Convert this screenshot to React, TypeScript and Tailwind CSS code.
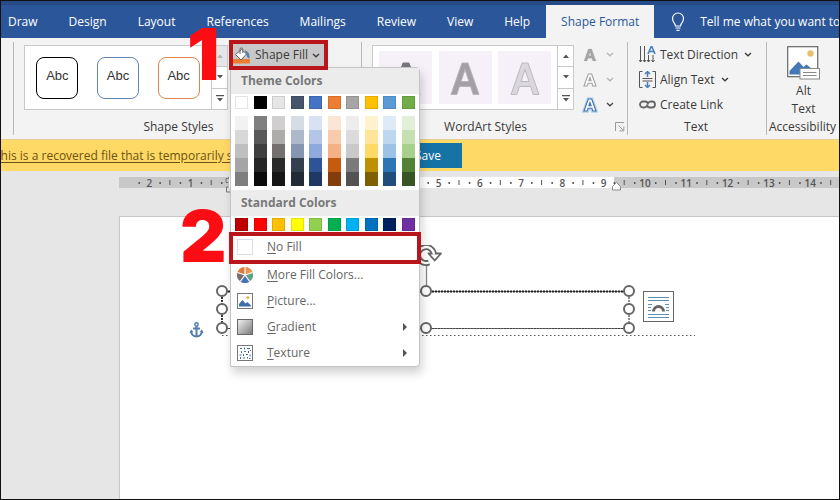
import { ReactNode } from "react";

const FONT = "font-['Open_Sans','Noto_Sans',sans-serif]";

const tabs = ["Draw", "Design", "Layout", "References", "Mailings", "Review", "View", "Help"];

const themeColors = ["#ffffff", "#000000", "#e7e6e6", "#44546a", "#4472c4", "#ed7d31", "#a5a5a5", "#ffc000", "#5b9bd5", "#70ad47"];

const themeShades = [
  ["#f2f2f2", "#d8d8d8", "#bfbfbf", "#a5a5a5", "#7f7f7f"],
  ["#7f7f7f", "#595959", "#3f3f3f", "#262626", "#0c0c0c"],
  ["#d0cece", "#aeabab", "#757070", "#2b2a2a", "#171616"],
  ["#d6dce4", "#adb9ca", "#8496b0", "#323f4f", "#222a35"],
  ["#d9e2f3", "#b4c6e7", "#8eaadb", "#2f5496", "#1f3864"],
  ["#fbe5d5", "#f7cbac", "#f4b183", "#c55a11", "#833c0b"],
  ["#ededed", "#dbdbdb", "#c9c9c9", "#7b7b7b", "#525252"],
  ["#fff2cc", "#fee599", "#ffd965", "#bf9000", "#7f6000"],
  ["#deebf6", "#bdd7ee", "#9cc3e5", "#2e75b5", "#1e4e79"],
  ["#e2efd9", "#c5e0b3", "#a8d08d", "#538135", "#375623"],
];

const standardColors = ["#c00000", "#ff0000", "#ffc000", "#ffff00", "#92d050", "#00b050", "#00b0f0", "#0070c0", "#002060", "#7030a0"];

function Chevron({ className = "" }: { className?: string }) {
  return (
    <svg viewBox="0 0 8 5" className={`h-[5px] w-2 shrink-0 ${className}`} fill="none" stroke="currentColor" strokeWidth="1.3">
      <path d="M1 1l3 2.8L7 1" />
    </svg>
  );
}

function ScrollColumn({ label, atTop = false }: { label: string; atTop?: boolean }) {
  return (
    <div className="flex w-4 flex-col divide-y divide-[#c9c9c9] border-l border-[#c9c9c9] text-[#555]">
      <button aria-label={`${label}: previous row`} className={`flex flex-1 items-center justify-center ${atTop ? "bg-[#e6e6e6] text-[#b5b5b5]" : ""}`}>
        <svg viewBox="0 0 6 4" className="h-1 w-1.5" fill="currentColor"><path d="M0 4l3-3.6L6 4z" /></svg>
      </button>
      <button aria-label={`${label}: next row`} className="flex flex-1 items-center justify-center">
        <svg viewBox="0 0 6 4" className="h-1 w-1.5" fill="currentColor"><path d="M0 0l3 3.6L6 0z" /></svg>
      </button>
      <button aria-label={`${label}: more`} className="flex flex-1 items-center justify-center">
        <svg viewBox="0 0 8 7" className="h-[7px] w-2" fill="currentColor"><path d="M0 0h8v1.2H0zM1 3l3 3.6L7 3z" /></svg>
      </button>
    </div>
  );
}

function Launcher({ label }: { label: string }) {
  return (
    <button aria-label={label} className="text-[#999]">
      <svg viewBox="0 0 10 10" className="size-[10px]" fill="none" stroke="currentColor">
        <path d="M.5 9V.5H9M3.5 3.5L8 8M8.8 4.5v4.3H4.5" />
      </svg>
    </button>
  );
}

function Group({ title, launcher = false, className = "", children }: { title: string; launcher?: boolean; className?: string; children: ReactNode }) {
  return (
    <section aria-label={title} className={`flex shrink-0 flex-col border-l border-[#b9b9b9] ${className}`}>
      <div className="flex flex-1 items-start">{children}</div>
      <div className="flex h-4 items-center pr-0.5">
        <span className={`flex-1 text-center text-xs leading-4 whitespace-nowrap ${launcher ? "pr-1.5" : ""}`}>{title}</span>
        {launcher && <Launcher label={`${title} settings`} />}
      </div>
    </section>
  );
}

function BucketIcon() {
  return (
    <svg viewBox="0 0 18 17" className="h-[17px] w-[18px] shrink-0">
      <rect x="0" y="12" width="17" height="4.5" fill="#ed7d31" />
      <path d="M11.500 3.500c3.500.4 5.500 3 5 8-1.800-.6-3-2-3-4.500z" fill="#5380ad" />
      <path d="M2.500 7.500L8.500 2.500l5 4.500-5.500 6z" fill="#fff" stroke="#666" />
      <path d="M7 7V2.200C7 .4 9.800.4 9.800 2.200V6" fill="none" stroke="#666" />
    </svg>
  );
}

function ColorWheelIcon() {
  return (
    <svg viewBox="0 0 16 16" className="size-4">
      <path d="M8 8L8 0A8 8 0 0 1 15.600 5.500z" fill="#e8934f" />
      <path d="M8 8L15.600 5.500A8 8 0 0 1 12.700 14.500z" fill="#5f9f86" />
      <path d="M8 8L12.700 14.500A8 8 0 0 1 3.300 14.500z" fill="#4674b4" />
      <path d="M8 8L3.300 14.500A8 8 0 0 1 .4 5.500z" fill="#7c6f74" />
      <path d="M8 8L.4 5.500A8 8 0 0 1 8 0z" fill="#dd7a3c" />
      <path d="M8 8V0M8 8l7.600-2.500M8 8l4.700 6.500M8 8l-4.700 6.500M8 8L.4 5.500" stroke="#fff" strokeWidth="1.200" />
    </svg>
  );
}

function PictureIcon() {
  return (
    <svg viewBox="0 0 16 16" className="size-4">
      <rect x=".5" y=".5" width="15" height="15" fill="#fff" stroke="#777" />
      <path d="M2 13.500V11l3.500-4 3 3.500L10.500 9l3.500 3.500v1z" fill="#3f6ea8" />
      <circle cx="10.800" cy="4.500" r="1.500" fill="#e8b450" />
    </svg>
  );
}

function GradientIcon() {
  return (
    <svg viewBox="0 0 16 16" className="size-4">
      <defs>
        <linearGradient id="grey-fade" x1="0" y1="0" x2="1" y2="1">
          <stop offset="0" stopColor="#f4f4f4" />
          <stop offset="1" stopColor="#777" />
        </linearGradient>
      </defs>
      <rect x=".5" y=".5" width="15" height="15" fill="url(#grey-fade)" stroke="#666" />
    </svg>
  );
}

function TextureIcon() {
  return (
    <svg viewBox="0 0 16 16" className="size-4">
      <rect x=".5" y=".5" width="15" height="15" fill="#fff" stroke="#777" />
      <path
        d="M3 3h2v1H3zM7 2.500h1v2H7zM10 3h3v1h-3zM4 6h1v2H4zM7 6h2v1H7zM11 6h1v2h-1zM13 5h1v1h-1zM2.500 9.500h2v1h-2zM6 9h1v2H6zM9 9h2v1H9zM12.500 9.500h1v2h-1zM3 12h1v2H3zM6 12.500h2v1H6zM10 12h1v1.500h-1zM12 13h1.500v1H12z"
        fill="#3f6ea8"
      />
    </svg>
  );
}

function Swatch({ color, name }: { color: string; name: string }) {
  return <button role="menuitem" aria-label={name} className="block size-[13px] border border-black/10" style={{ backgroundColor: color }} />;
}

function MenuRow({ hotkey, rest, icon, submenu = false }: { hotkey: string; rest: string; icon: ReactNode; submenu?: boolean }) {
  return (
    <button role="menuitem" className="flex h-[26px] w-full items-center pr-3 pl-1.5 text-left">
      <span className="flex w-[30px] shrink-0 items-center">{icon}</span>
      <span className="flex-1 text-xs"><u className="underline-offset-2">{hotkey}</u>{rest}</span>
      {submenu && <svg viewBox="0 0 4 8" className="h-2 w-1" fill="#555"><path d="M0 0l4 4-4 4z" /></svg>}
    </button>
  );
}

function FillMenu() {
  return (
    <div role="menu" aria-label="Shape Fill" className="absolute top-[25px] -left-px z-20 w-[190px] rounded-r-sm border border-[#c4c4c4] bg-white text-[#666] shadow-[2px_6px_10px_rgba(0,0,0,0.18)]">
      <h3 className="h-[26px] bg-[#ececec] pl-2.5 text-xs leading-[26px] font-bold text-[#787878]">Theme Colors</h3>
      <div className="flex justify-between px-1 pt-0.5">
        {themeColors.map((c) => <Swatch key={c} color={c} name={`Theme ${c}`} />)}
      </div>
      <div className="flex justify-between px-1 pt-[7px] pb-1">
        {themeShades.map((column, i) => (
          <div key={i} className="flex flex-col">
            {column.map((c) => (
              <button key={c} role="menuitem" aria-label={`Shade ${c}`} className="h-3.5 w-[13px]" style={{ backgroundColor: c }} />
            ))}
          </div>
        ))}
      </div>
      <h3 className="h-[26px] bg-[#ececec] pl-2.5 text-xs leading-[26px] font-bold text-[#787878]">Standard Colors</h3>
      <div className="flex justify-between px-1 pt-0.5 pb-[3px]">
        {standardColors.map((c) => <Swatch key={c} color={c} name={`Standard ${c}`} />)}
      </div>
      <div className="relative">
        <MenuRow hotkey="N" rest="o Fill" icon={<span className="size-4 border border-[#dcdcea]" />} />
        <span className="pointer-events-none absolute -inset-x-0.5 -top-0.5 h-8 border-4 border-[#b9151b]" />
        <span className="absolute -top-[34px] -left-[51px] text-[72px] leading-none font-black text-[#fb0d13] font-['Inter',sans-serif]">2</span>
      </div>
      <div className="pt-0.5">
        <MenuRow hotkey="M" rest="ore Fill Colors..." icon={<ColorWheelIcon />} />
        <MenuRow hotkey="P" rest="icture..." icon={<PictureIcon />} />
        <MenuRow hotkey="G" rest="radient" icon={<GradientIcon />} submenu />
        <MenuRow hotkey="T" rest="exture" icon={<TextureIcon />} submenu />
      </div>
    </div>
  );
}

function ShapeStyle({ label, className }: { label: string; className: string }) {
  return (
    <button aria-label={label} className={`flex size-[42px] items-start justify-center rounded-lg border pt-2 text-[13px] leading-5 text-[#333] font-['Liberation_Sans',sans-serif] ${className}`}>
      Abc
    </button>
  );
}

function WordArt({ label, fill, stroke }: { label: string; fill: string; stroke: string }) {
  return (
    <button aria-label={label} className="flex size-[53px] items-end justify-center bg-[#f6f1f8] pb-2">
      <svg viewBox="0 0 30 34" className="h-[34px] w-[30px]">
        <path
          d="M12 1h6L29 32.500h-5.800l-2.600-8H9.400l-2.600 8H1zM15 7.500L11 19.500h8z"
          fill={fill} fillRule="evenodd" stroke={stroke}
        />
      </svg>
    </button>
  );
}

function LetterTool({ label, kind }: { label: string; kind: "fill" | "outline" | "glow" }) {
  const fill = kind === "fill" ? "#a6a6a6" : "#fff";
  const stroke = kind === "glow" ? "#3f72ab" : "#a0a0a0";
  return (
    <button aria-label={label} className={`flex h-[25px] items-center gap-2 ${kind === "glow" ? "text-[#444]" : "text-[#b5b5b5]"}`}>
      <svg viewBox="0 0 16 16" className="size-4">
        {kind === "glow" && <path d="M6.300 2h3.400l4.300 12h-3.500l-.8-2.500H6.300L5.500 14H2z" fill="none" stroke="#b9d2ec" strokeWidth="3.500" />}
        <path d="M6.300 2h3.400l4.300 12h-3.200l-.9-2.800H6.100L5.200 14H2zM8 5.500L6.900 8.800h2.200z" fill={fill} fillRule="evenodd" stroke={stroke} strokeWidth={kind === "fill" ? 0.2 : 1.1} />
      </svg>
      <Chevron />
    </button>
  );
}

function Ruler() {
  const zero = 113;
  const pitch = 41.3;
  const units = Array.from({ length: 17 }, (_, i) => i - 2);
  return (
    <svg aria-label="Ruler" className="block h-4 w-full text-[10px] font-semibold" fill="#555">
      <rect x="0" y="0" width="100%" height="11" fill="#c8c8c8" />
      <rect x="110" y="0" width="385" height="11" fill="#fff" />
      {units.map((n) => {
        const x = zero + n * pitch;
        return (
          <g key={n}>
            {(n < 0 || n > 4) && <text x={x} y="9.500" textAnchor="middle">{Math.abs(n)}</text>}
            <rect x={x - 11} y="5" width="1.500" height="2" />
            <rect x={x + 10} y="5" width="1.500" height="2" />
            <rect x={x + 20} y="3" width="1" height="5" />
          </g>
        );
      })}
      <path d="M109.500-2v3.500h-2.500v4h2.500M109.500 10h-2v5h4" fill="none" stroke="#777" />
      <path d="M497.500 5.500l4 4v3.500h-8v-3.500z" fill="#fff" stroke="#888" />
    </svg>
  );
}

function ShapeSelection() {
  const handles = [[33, 46], [33, 64], [33, 83], [237, 46], [237, 83], [440, 46], [440, 64], [440, 83]];
  const rotateArc = "M240 17.500A8 8 0 1 1 245 9.500";
  return (
    <svg viewBox="0 0 510 100" className="absolute top-[28px] left-[69px] h-[100px] w-[510px]" role="img" aria-label="Selected text box">
      <path d="M33 46.500h407M33 83.500h407" fill="none" stroke="#777" strokeWidth="1.200" />
      <path d="M33 46.500h407M33 46v37" fill="none" stroke="#222" strokeWidth="1.800" strokeDasharray="2 1" />
      <path d="M440 46v37M33 83.500h407" fill="none" stroke="#444" strokeWidth="1.200" strokeDasharray="2 1" />
      <path d="M33 90.500h473" stroke="#555" strokeDasharray="1.500 2.500" />
      <path d="M237.500 20v22" stroke="#888" strokeWidth="1.300" />
      <g fill="none">
        <path d={rotateArc} stroke="#666" strokeWidth="6" />
        <path d="M239.500 8.500h12.500l-6.300 7z" fill="#fff" stroke="#666" strokeWidth="1.800" strokeLinejoin="round" />
        <path d={rotateArc} stroke="#fff" strokeWidth="2.400" />
      </g>
      {handles.map(([x, y]) => <circle key={`${x}-${y}`} cx={x} cy={y} r="5" fill="#fff" stroke="#666" strokeWidth="2" />)}
      <g fill="none" stroke="#4f7fae" strokeWidth="2">
        <circle cx="7.500" cy="79.500" r="1.700" strokeWidth="1.500" />
        <path d="M7.500 81v10M4 83.500h7" />
        <path d="M2 86c.5 4 3 5.500 5.500 5.500S12.500 90 13 86" />
      </g>
      <path d="M.5 88L2 84.500 4.500 87zM14.500 88L13 84.500 10.500 87z" fill="#4f7fae" />
    </svg>
  );
}

export default function App() {
  return (
    <div className={`flex h-screen flex-col overflow-hidden border border-[#111] bg-[#e6e6e6] text-xs text-[#3a3a3a] ${FONT}`}>
      <nav aria-label="Ribbon tabs" className="flex h-[37px] shrink-0 items-stretch overflow-hidden border-t-4 border-[#274b87] bg-[#2b579a] text-white">
        <div className="-ml-2 flex shrink-0 gap-px pr-px">
          {tabs.map((t) => (
            <button key={t} className="px-[15px] whitespace-nowrap">{t}</button>
          ))}
        </div>
        <button aria-current="page" className="w-[108px] shrink-0 bg-[#f3f3f3] whitespace-nowrap text-[#2b579a]">Shape Format</button>
        <button className="flex shrink-0 items-center gap-3.5 pl-4 whitespace-nowrap">
          <svg viewBox="0 0 16 20" className="h-5 w-4" fill="none" stroke="#fff" strokeWidth="1.200">
            <path d="M5.500 14c0-2.500-3-3.500-3-7.500a5.500 5.500 0 0 1 11 0c0 4-3 5-3 7.500zM5.500 16h5M6.500 18.300h3" />
          </svg>
          Tell me what you want to
        </button>
      </nav>

      <div className="relative z-10 flex h-[101px] shrink-0 bg-[#f3f3f3] pt-1 pb-1 pl-3 text-[#3a3a3a]">
        <Group title="Shape Styles" launcher className="w-[348px]">
          <div className="mt-[3px] ml-2.5 flex h-[65px] w-[204px] shrink-0 border border-[#c9c9c9] bg-white">
            <div className="flex flex-1 items-center justify-around px-0.5">
              <ShapeStyle label="Black outline" className="border-black" />
              <ShapeStyle label="Blue outline" className="border-[#5f86b3]" />
              <ShapeStyle label="Orange outline" className="border-[#e0844a]" />
            </div>
            <ScrollColumn label="Shape styles" atTop />
          </div>
          <div className="relative ml-[3px]">
            <button aria-haspopup="menu" aria-expanded="true" className="flex h-[26px] w-[96px] items-center gap-1 bg-[#c8c8c8] pr-1 pl-0.5 whitespace-nowrap">
              <BucketIcon />
              Shape Fill
              <Chevron />
            </button>
            <span className="pointer-events-none absolute -top-0.5 -left-0.5 z-30 h-[30px] w-[99px] border-4 border-[#b9151b]" />
            <span className="absolute -top-[24px] -left-[44px] z-30 text-[72px] leading-none font-black text-[#fb0d13] font-['Inter',sans-serif]">1</span>
            <FillMenu />
          </div>
        </Group>

        <Group title="WordArt Styles" launcher className="w-[266px]">
          <div className="mt-[3px] ml-2.5 flex h-[65px] w-[202px] shrink-0 border border-[#c9c9c9] bg-white">
            <div className="flex flex-1 items-center justify-between px-1.5">
              <WordArt label="Dark fill" fill="#777" stroke="#777" />
              <WordArt label="Grey fill" fill="#a3a0a5" stroke="#b5b2b8" />
              <WordArt label="Light fill" fill="#d9d6dc" stroke="#bcb8c0" />
            </div>
            <ScrollColumn label="WordArt styles" />
          </div>
          <div className="ml-2 flex flex-col">
            <LetterTool label="Text fill" kind="fill" />
            <LetterTool label="Text outline" kind="outline" />
            <LetterTool label="Text effects" kind="glow" />
          </div>
        </Group>

        <Group title="Text" className="w-[139px]">
          <div className="flex flex-col pl-[11px] whitespace-nowrap">
            <button className="flex h-[25px] items-center gap-1">
              <svg viewBox="0 0 17 17" className="size-[17px]" fill="none" stroke="#555">
                <path d="M1.500 0v16M5.500 0v16M9.500 9v7M14 9v7M0 14l1.500 2L3 14M4 14l1.500 2L7 14M8 14l1.500 2 1.500-2M12.500 14l1.500 2 1.500-2" />
                <path d="M9 8l3.200-7.500h.6L16 8M10.200 5.500h4.600" stroke="#4a7ebb" strokeWidth="1.600" />
              </svg>
              Text Direction <Chevron className="ml-0.5" />
            </button>
            <button className="flex h-[25px] items-center gap-1">
              <svg viewBox="0 0 17 17" className="size-[17px]" fill="none" stroke="#555">
                <path d="M3.500.5h-3v16h3M13.500.5h3v16h-3M3.500 7.500h10M3.500 10h10" />
                <path d="M8.500 0v6M6 3l2.500-2.500L11 3M8.500 17v-6M6 14l2.500 2.500L11 14" stroke="#4a7ebb" strokeWidth="1.500" />
              </svg>
              Align Text <Chevron className="ml-0.5" />
            </button>
            <button className="flex h-[25px] items-center gap-1">
              <svg viewBox="0 0 17 9" className="h-[9px] w-[17px]" fill="none" stroke="#666" strokeWidth="1.800">
                <path d="M8 5.500C7.500 7 6.500 7.500 5 7.500H4a3 3 0 0 1 0-6h2c1.500 0 3 1 3 3" />
                <path d="M9 3.500c.5-1.500 1.500-2 3-2h1a3 3 0 0 1 0 6h-2c-1.500 0-3-1-3-3" />
              </svg>
              Create Link
            </button>
          </div>
        </Group>

        <Group title="Accessibility" className="w-[74px]">
          <button className="flex w-full flex-col items-center pt-1 leading-[18px]">
            <svg viewBox="0 0 33 34" className="mb-0.5 h-[34px] w-[33px]">
              <rect x=".7" y=".7" width="30" height="30" fill="#fff" stroke="#666" strokeWidth="1.200" />
              <circle cx="23.500" cy="7.500" r="3.200" fill="#e8c070" />
              <path d="M2.500 28.500V25l9-9.500 5 5.500 3-2.500 5 4V28.500z" fill="#4178b5" />
              <rect x="13" y="22.500" width="19.500" height="10.500" fill="#fff" stroke="#888" />
              <path d="M16 26.500h13.500M16 29.500h13.500" stroke="#888" />
            </svg>
            <span>Alt</span>
            <span>Text</span>
          </button>
        </Group>
      </div>

      <div className="flex h-8 shrink-0 items-center overflow-hidden border-t border-[#e2cf92] bg-[#ffd966]">
        <a href="#recovered" className="-ml-[7px] block w-[400px] shrink-0 overflow-hidden whitespace-nowrap text-[#6b5210] underline underline-offset-2">
          This is a recovered file that is temporarily stored on your computer.
        </a>
        <button className="h-[25px] w-[68px] bg-[#1673a6] text-white">Save</button>
      </div>

      <main className="flex min-h-0 flex-1 flex-col pt-1.5 pl-[118px]">
        <div className="h-[39px] shrink-0"><Ruler /></div>
        <div className="relative flex-1 border-t border-l border-[#c6c6c6] bg-white">
          <ShapeSelection />
          <button aria-label="Layout options" className="absolute top-[74px] left-[523px]">
            <svg viewBox="0 0 31 31" className="size-[31px]" fill="none">
              <rect x=".5" y=".5" width="30" height="30" fill="#fff" stroke="#666" />
              <path d="M5 6.500h21M5 9.500h21M5 23.500h21M5 26.500h21M5 13.500h4M5 16.500h3M5 19.500h3M22 13.500h4M23 16.500h3M23 19.500h3" stroke="#5d8fae" />
              <path d="M10.500 20.500a5 5 0 0 1 10 0" stroke="#666" strokeWidth="3" />
            </svg>
          </button>
        </div>
      </main>
    </div>
  );
}
